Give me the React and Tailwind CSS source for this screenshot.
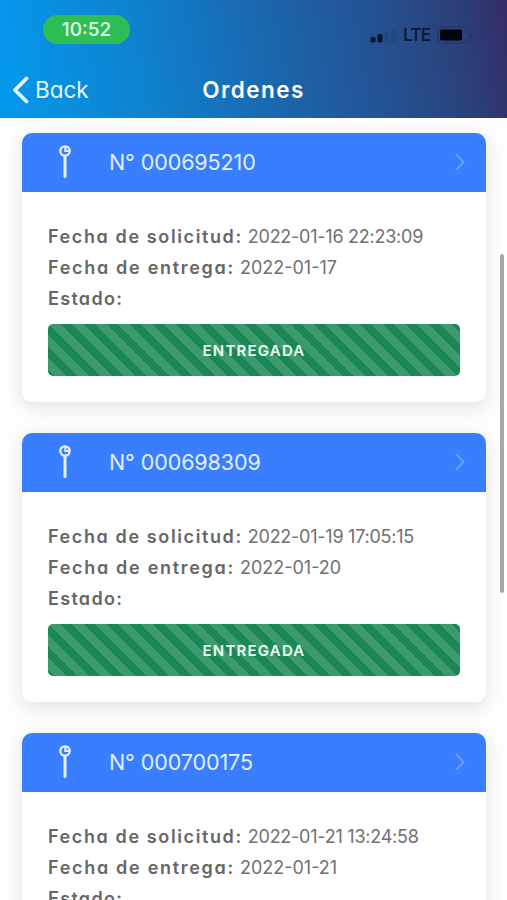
const orders = [
  { id: "000695210", requested: "2022-01-16 22:23:09", delivered: "2022-01-17", status: "ENTREGADA" },
  { id: "000698309", requested: "2022-01-19 17:05:15", delivered: "2022-01-20", status: "ENTREGADA" },
  { id: "000700175", requested: "2022-01-21 13:24:58", delivered: "2022-01-21", status: "ENTREGADA" },
];

function StatusBar() {
  return (
    <div className="flex h-[60px] items-start justify-between pl-[43px] pr-[34px] pt-[15px]">
      <span className="flex h-[29px] w-[87px] items-center justify-center rounded-full bg-[#2fbe56] pt-[2px] text-[19px] font-medium text-[#e3ffe9]">
        10:52
      </span>
      <div className="flex items-center pt-[10px]">
        <svg className="mr-[7px] h-[16px] w-[26px]" viewBox="0 0 26 16">
          <rect x="0.5" y="10" width="5" height="5.5" rx="1.8" fill="#071428" />
          <rect x="7.5" y="7" width="5" height="8.5" rx="1.8" fill="#071428" />
          <rect x="14.5" y="4" width="4.5" height="11.5" rx="1.5" fill="#214a80" />
          <rect x="21" y="1" width="4.5" height="14.5" rx="1.5" fill="#214a80" />
        </svg>
        <span className="mr-[7px] w-[27px] text-[17.5px] font-medium leading-[20px] tracking-[-0.9px] text-[#0c1833]">LTE</span>
        <svg className="h-[18px] w-[36px]" viewBox="0 0 36 18">
          <rect x="0.8" y="1" width="31" height="16" rx="5" fill="none" stroke="#253a68" strokeWidth="1.4" />
          <rect x="3" y="3.5" width="22" height="11" rx="2" fill="#02040b" />
          <path d="M34 6.5v5l2-2.5z" fill="#1f2c56" />
        </svg>
      </div>
    </div>
  );
}

function OrderCard({ order }) {
  return (
    <div className="h-[269px] shrink-0 overflow-hidden rounded-[10px] bg-white shadow-[0_5px_18px_rgba(0,0,0,0.11)]">
      <div className="flex h-[59px] items-center bg-[#387efe] pb-[2px] pl-[37px] pr-[20px] text-[#e1efff]">
        <svg className="mr-[38px] h-[36px] w-[12px] overflow-visible" viewBox="0 0 12 36" fill="none" stroke="currentColor">
          <circle cx="6" cy="7" r="4.7" strokeWidth="2.3" />
          <path d="M6.3 3v4h4" strokeWidth="2" />
          <path d="M6 12.5v20" strokeWidth="3" strokeLinecap="round" />
        </svg>
        <span className="flex-1 text-[21.5px] leading-[30px] tracking-[-0.1px]">N° {order.id}</span>
        <svg className="mt-px h-[18px] w-[12px]" viewBox="0 0 12 18" fill="none" stroke="#71a6fe" strokeWidth="1.8">
          <path d="M2 1l7.5 8L2 17" />
        </svg>
      </div>
      <div className="px-[26px] pt-[29px] text-[18px] leading-[31px] text-[#707070]">
        <p>
          <b className="font-semibold tracking-[1.61px] text-[#666]">Fecha de solicitud:</b>{" "}
          <span className="tracking-[-0.25px]">{order.requested}</span>
        </p>
        <p>
          <b className="font-semibold tracking-[1.7px] text-[#666]">Fecha de entrega:</b> {order.delivered}
        </p>
        <p>
          <b className="font-semibold tracking-[1.3px] text-[#666]">Estado:</b>
        </p>
        <div className="mt-[10px] flex h-[52px] items-center justify-center rounded-[5px] bg-[#1b8755] bg-[linear-gradient(45deg,rgba(255,255,255,0.15)_25%,transparent_25%,transparent_50%,rgba(255,255,255,0.15)_50%,rgba(255,255,255,0.15)_75%,transparent_75%,transparent)] bg-[length:23px_23px] bg-[position:1px_0px] text-[15px] font-semibold tracking-[1.2px] text-[#e9fff2]">
          {order.status}
        </div>
      </div>
    </div>
  );
}

export default function App() {
  return (
    <div className="relative flex h-[900px] w-[507px] flex-col overflow-hidden bg-[#fdfdfd] font-['Inter',sans-serif] [font-feature-settings:'cv11']">
      <header className="h-[118px] shrink-0 bg-[linear-gradient(80deg,#0499ed_0%,#0e83d0_28%,#1a68af_52%,#25508f_76%,#2b4079_90%,#342c65_100%)] text-white">
        <StatusBar />
        <div className="grid h-[60px] grid-cols-[1fr_auto_1fr] items-center pl-[12px] pr-[12px]">
          <button className="flex items-center gap-[6px] text-[22.5px] text-[#e3f5ff]">
            <svg className="h-[28px] w-[17px]" viewBox="0 0 17 28" fill="none" stroke="currentColor" strokeWidth="3.8">
              <path d="M14.5 2.5L3 14 14.5 25.5" strokeLinecap="round" strokeLinejoin="round" />
            </svg>
            Back
          </button>
          <h1 className="text-[22.5px] font-semibold tracking-[1.4px]">Ordenes</h1>
        </div>
      </header>
      <main className="flex flex-col gap-[31px] pl-[22px] pr-[21px] pt-[15px]">
        {orders.map((order) => (
          <OrderCard key={order.id} order={order} />
        ))}
      </main>
      {/* scroll indicator */}
      <div className="absolute right-[3px] top-[254px] h-[339px] w-[4px] rounded-full bg-[#a8a8a8]" />
    </div>
  );
}
